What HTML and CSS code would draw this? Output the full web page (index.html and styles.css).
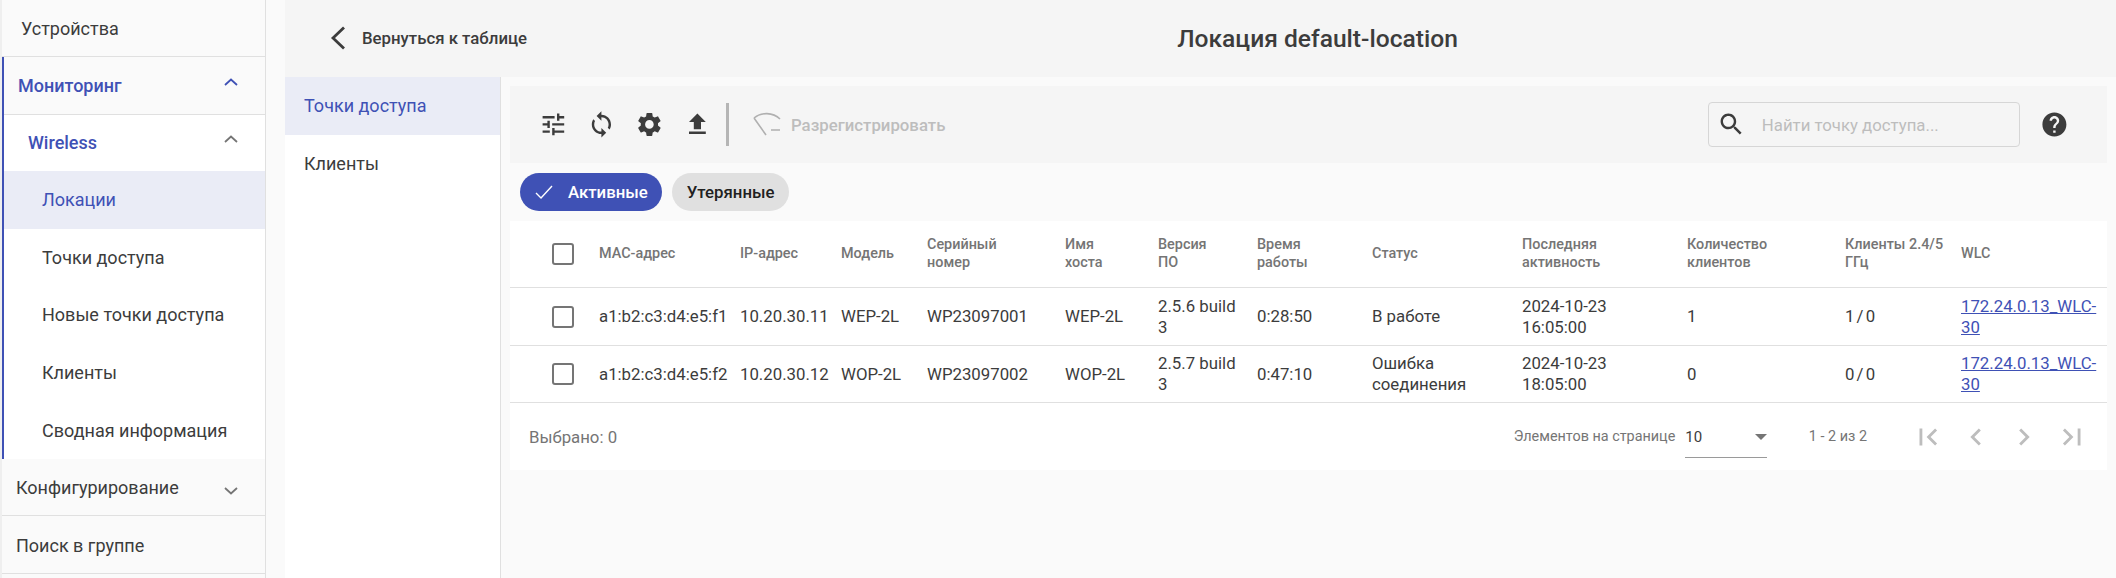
FILE: index.html
```html
<!DOCTYPE html>
<html lang="ru">
<head>
<meta charset="utf-8">
<title>Локация default-location</title>
<link rel="stylesheet" href="styles.css">
</head>
<body>
<div class="app">
  <nav class="sidebar">
    <div class="nav-item top first"><span class="label-first">Устройства</span></div>
    <div class="nav-group">
      <div class="nav-item top active-parent"><span>Мониторинг</span><svg class="chev up" viewBox="0 0 14 8"><polyline points="1,7 7,1.5 13,7"/></svg></div>
      <div class="nav-sub">
        <div class="nav-item wireless"><span>Wireless</span><svg class="chev up gray" viewBox="0 0 14 8"><polyline points="1,7 7,1.5 13,7"/></svg></div>
        <div class="nav-item leaf selected">Локации</div>
        <div class="nav-item leaf">Точки доступа</div>
        <div class="nav-item leaf">Новые точки доступа</div>
        <div class="nav-item leaf">Клиенты</div>
        <div class="nav-item leaf">Сводная информация</div>
      </div>
    </div>
    <div class="nav-item top plain"><span>Конфигурирование</span><svg class="chev down gray" viewBox="0 0 14 8"><polyline points="1,1 7,6.5 13,1"/></svg></div>
    <div class="nav-item top plain last"><span>Поиск в группе</span></div>
  </nav>
  <main class="main">
    <header class="page-head">
      <a class="back"><svg class="back-icon" viewBox="0 0 16 24"><polyline points="14,1.5 3,12 14,22.5"/></svg><span>Вернуться к таблице</span></a>
      <h1 class="title">Локация default-location</h1>
    </header>
    <div class="page-body">
      <aside class="tabs">
        <div class="tab on">Точки доступа</div>
        <div class="tab">Клиенты</div>
      </aside>
      <section class="content">
        <div class="toolbar">
          <button class="icon-btn"><svg viewBox="0 0 24 24"><path d="M3 17v2h6v-2H3zM3 5v2h10V5H3zm10 16v-2h8v-2h-8v-2h-2v6h2zM7 9v2H3v2h4v2h2V9H7zm14 4v-2H11v2h10zm-6-4h2V7h4V5h-4V3h-2v6z"/></svg></button>
          <button class="icon-btn"><svg viewBox="0 0 24 24"><path d="M12 4V1L8 5l4 4V6c3.31 0 6 2.69 6 6 0 1.01-.25 1.97-.7 2.8l1.46 1.46C19.54 15.03 20 13.57 20 12c0-4.42-3.58-8-8-8zm0 14c-3.31 0-6-2.69-6-6 0-1.01.25-1.97.7-2.8L5.24 7.74C4.46 8.97 4 10.43 4 12c0 4.42 3.58 8 8 8v3l4-4-4-4v3z"/></svg></button>
          <button class="icon-btn"><svg viewBox="0 0 24 24"><path d="M19.14 12.94c.04-.3.06-.61.06-.94 0-.32-.02-.64-.07-.94l2.03-1.58c.18-.14.23-.41.12-.61l-1.92-3.32c-.12-.22-.37-.29-.59-.22l-2.39.96c-.5-.38-1.03-.7-1.62-.94l-.36-2.54c-.04-.24-.24-.41-.48-.41h-3.84c-.24 0-.43.17-.47.41l-.36 2.54c-.59.24-1.13.57-1.62.94l-2.39-.96c-.22-.08-.47 0-.59.22L2.74 8.87c-.12.21-.08.47.12.61l2.03 1.58c-.05.3-.09.63-.09.94s.02.64.07.94l-2.03 1.58c-.18.14-.23.41-.12.61l1.92 3.32c.12.22.37.29.59.22l2.39-.96c.5.38 1.03.7 1.62.94l.36 2.54c.05.24.24.41.48.41h3.84c.24 0 .44-.17.47-.41l.36-2.54c.59-.24 1.13-.56 1.62-.94l2.39.96c.22.08.47 0 .59-.22l1.92-3.32c.12-.22.07-.47-.12-.61l-2.01-1.58zM12 15.6c-1.98 0-3.6-1.62-3.6-3.6s1.62-3.6 3.6-3.6 3.6 1.62 3.6 3.6-1.62 3.6-3.6 3.6z"/></svg></button>
          <button class="icon-btn"><svg viewBox="0 0 24 24"><path d="M9 16h6v-6h4l-7-7-7 7h4zm-4 2h14v2H5z"/></svg></button>
          <span class="divider"></span>
          <span class="unreg"><svg class="unreg-icon" viewBox="0 0 28 26"><path d="M1 6C8 0 20 0 27 7M1 6L13 23M18 18H27"/></svg>Разрегистрировать</span>
          <label class="search"><svg viewBox="0 0 24 24"><path d="M15.5 14h-.79l-.28-.27C15.41 12.59 16 11.11 16 9.5 16 5.91 13.09 3 9.5 3S3 5.91 3 9.5 5.91 16 9.5 16c1.61 0 3.09-.59 4.23-1.57l.27.28v.79l5 4.99L20.49 19l-4.99-5zm-6 0C7.01 14 5 11.99 5 9.5S7.01 5 9.5 5 14 7.01 14 9.5 11.99 14 9.5 14z"/></svg><span>Найти точку доступа...</span></label>
          <button class="icon-btn help"><svg viewBox="0 0 24 24"><path d="M12 2C6.48 2 2 6.48 2 12s4.48 10 10 10 10-4.48 10-10S17.52 2 12 2zm1 17h-2v-2h2v2zm2.07-7.75l-.9.92C13.45 12.9 13 13.5 13 15h-2v-.5c0-1.1.45-2.1 1.17-2.83l1.24-1.26c.37-.36.59-.86.59-1.41 0-1.1-.9-2-2-2s-2 .9-2 2H8c0-2.21 1.79-4 4-4s4 1.79 4 4c0 .88-.36 1.68-.93 2.25z"/></svg></button>
        </div>
        <div class="chips">
          <span class="chip chip-on"><svg class="check" viewBox="0 0 18 14"><polyline points="1,8 6,13 17,1"/></svg>Активные</span>
          <span class="chip">Утерянные</span>
        </div>
        <div class="card">
          <table class="grid">
            <colgroup>
              <col class="c-check"><col class="c-mac"><col class="c-ip"><col class="c-model"><col class="c-serial"><col class="c-host"><col class="c-ver"><col class="c-time"><col class="c-status"><col class="c-last"><col class="c-count"><col class="c-clients"><col class="c-wlc">
            </colgroup>
            <thead>
              <tr>
                <th class="check-cell"><span class="box"></span></th>
                <th>МАС-адрес</th><th>IP-адрес</th><th>Модель</th><th>Серийный<br>номер</th><th>Имя<br>хоста</th><th>Версия<br>ПО</th><th>Время<br>работы</th><th>Статус</th><th>Последняя<br>активность</th><th>Количество<br>клиентов</th><th>Клиенты 2.4/5<br>ГГц</th><th>WLC</th>
              </tr>
            </thead>
            <tbody>
              <tr>
                <td class="check-cell"><span class="box"></span></td>
                <td>a1:b2:c3:d4:e5:f1</td><td>10.20.30.11</td><td>WEP-2L</td><td>WP23097001</td><td>WEP-2L</td><td>2.5.6 build<br>3</td><td>0:28:50</td><td>В работе</td><td>2024-10-23<br>16:05:00</td><td>1</td><td class="ratio">1 / 0</td><td><a class="link">172.24.0.13_WLC-<br>30</a></td>
              </tr>
              <tr>
                <td class="check-cell"><span class="box"></span></td>
                <td>a1:b2:c3:d4:e5:f2</td><td>10.20.30.12</td><td>WOP-2L</td><td>WP23097002</td><td>WOP-2L</td><td>2.5.7 build<br>3</td><td>0:47:10</td><td>Ошибка<br>соединения</td><td>2024-10-23<br>18:05:00</td><td>0</td><td class="ratio">0 / 0</td><td><a class="link">172.24.0.13_WLC-<br>30</a></td>
              </tr>
            </tbody>
          </table>
          <div class="pager">
            <span class="selected-count">Выбрано: 0</span>
            <span class="per-page">Элементов на странице</span>
            <span class="select"><span>10</span><i class="caret"></i></span>
            <span class="range">1 - 2 из 2</span>
            <span class="pager-btns">
              <svg viewBox="0 0 24 24"><path d="M18.41 16.59L13.82 12l4.59-4.59L17 6l-6 6 6 6zM6 6h2v12H6z"/></svg>
              <svg viewBox="0 0 24 24"><path d="M15.41 7.41L14 6l-6 6 6 6 1.41-1.41L10.83 12z"/></svg>
              <svg viewBox="0 0 24 24"><path d="M10 6L8.59 7.41 13.17 12l-4.58 4.59L10 18l6-6z"/></svg>
              <svg viewBox="0 0 24 24"><path d="M5.59 7.41L10.18 12l-4.59 4.59L7 18l6-6-6-6zM16 6h2v12h-2z"/></svg>
            </span>
          </div>
        </div>
      </section>
    </div>
  </main>
</div>
</body>
</html>
```
FILE: styles.css
```css
* { box-sizing: border-box; }
html, body { margin: 0; height: 100%; overflow: hidden; }
body { background: #fafafa; font-family: Roboto, "Liberation Sans", sans-serif; color: #3c3c3c; }
.app { display: flex; height: 578px; }

/* sidebar */
.sidebar { width: 266px; flex: none; border-left: 2px solid #efefef; border-right: 1px solid #e0e0e0; background: #fafafa; }
.nav-item { height: 57.6px; display: flex; align-items: center; font-size: 18px; }
.nav-item.top { height: 57.5px; border-bottom: 1px solid #e0e0e0; justify-content: space-between; padding: 1px 27px 0 14px; }
.nav-item.first { height: 57px; padding-top: 0; }
.nav-item.last { height: 58px; }
.label-first { margin-left: 5px; }
.nav-group { border-left: 2px solid #3f51b5; }
.nav-group .nav-item.top { padding-left: 14px; }
.active-parent { color: #3f51b5; font-weight: 500; }
.nav-sub { background: #fff; }
.nav-item.wireless { height: 56.5px; justify-content: space-between; padding: 0 27px 0 24px; color: #3f51b5; font-weight: 500; }
.leaf { padding-left: 38px; }
.selected { background: #eaecf6; color: #3f51b5; }
.chev { width: 14px; height: 8px; fill: none; stroke: #3f51b5; stroke-width: 1.8; }
.chev.gray { stroke: #757575; }
.chev.up { margin-bottom: 7px; }
.chev.down { margin-top: 7px; }

/* main */
.main { flex: 1; min-width: 0; margin-left: 19px; display: flex; flex-direction: column; }
.page-head { height: 77px; flex: none; background: #f5f5f5; position: relative; display: flex; align-items: center; justify-content: center; padding-left: 234px; }
.back { position: absolute; left: 45px; top: 26px; display: flex; align-items: center; gap: 16px; font-size: 16.8px; font-weight: 500; color: #3c3c3c; }
.back-icon { width: 16px; height: 24px; fill: none; stroke: #3c3c3c; stroke-width: 2.8; }
.title { margin: 0; font-size: 24.6px; font-weight: 500; color: #3c3c3c; }
.page-body { flex: 1; display: flex; min-height: 0; }
.tabs { width: 216px; flex: none; background: #fff; border-right: 1px solid #e0e0e0; }
.tab { height: 57.5px; display: flex; align-items: center; padding-left: 19px; font-size: 18px; }
.tab.on { background: #eaecf6; color: #3f51b5; }
.content { flex: 1; min-width: 0; padding: 9px 9px 0; }

/* toolbar */
.toolbar { height: 77px; background: #f5f5f5; display: flex; align-items: center; padding: 0 29px 0 19.5px; }
.icon-btn { width: 48px; height: 48px; padding: 0; border: 0; background: none; display: flex; align-items: center; justify-content: center; }
.icon-btn svg { width: 28.8px; height: 28.8px; fill: #3c3c3c; }
.divider { width: 3px; height: 43px; background: #b5b5b5; margin-left: 4.5px; }
.unreg { display: flex; align-items: center; gap: 10px; margin-left: 24px; font-size: 16.8px; font-weight: 500; color: #bdbdbd; }
.unreg-icon { width: 28px; height: 26px; fill: none; stroke: #b0b0b0; stroke-width: 1.6; }
.search { margin-left: auto; margin-right: 10px; width: 312px; height: 45px; border: 1px solid #d6d6d6; border-radius: 4px; display: flex; align-items: center; gap: 16px; padding-left: 8px; font-size: 16.8px; color: #bdbdbd; }
.search svg { width: 28.8px; height: 28.8px; fill: #3c3c3c; flex: none; }

/* chips */
.chips { display: flex; gap: 10px; margin: 10px 0 10px 10px; }
.chip { height: 38px; border-radius: 19px; background: #e0e0e0; color: #212121; font-size: 16.8px; font-weight: 500; display: flex; align-items: center; padding: 0 15px; }
.chip-on { background: #3f51b5; color: #fff; padding-right: 14px; }
.check { width: 18px; height: 14px; fill: none; stroke: #fff; stroke-width: 1.4; margin-right: 15px; }

/* table */
.card { background: #fff; height: 249px; }
.grid { width: 100%; table-layout: fixed; border-collapse: separate; border-spacing: 0; }
.c-check { width: 89px; } .c-mac { width: 141px; } .c-ip { width: 101px; } .c-model { width: 86px; } .c-serial { width: 138px; } .c-host { width: 93px; } .c-ver { width: 99px; } .c-time { width: 115px; } .c-status { width: 150px; } .c-last { width: 165px; } .c-count { width: 158px; } .c-clients { width: 116px; }
.grid th, .grid td { padding: 0; text-align: left; vertical-align: middle; border-bottom: 1px solid #e0e0e0; white-space: nowrap; }
.grid th { height: 67px; font-size: 14.4px; line-height: 18px; font-weight: 500; color: #757575; }
.grid td { height: 57.5px; padding-top: 1px; font-size: 16.8px; line-height: 21px; color: #3c3c3c; }
.grid td.ratio { word-spacing: -2px; }
.check-cell { padding-left: 42px !important; }
.box { display: block; width: 22px; height: 22px; border: 2px solid #757575; border-radius: 3px; }
.link { color: #3f51b5; text-decoration: underline; }

/* pager */
.pager { height: 66px; display: flex; align-items: center; padding: 1px 19px 0; font-size: 14.4px; color: #757575; }
.selected-count { font-size: 16.8px; margin-right: auto; }
.select { width: 82px; height: 37px; margin: 6px 0 0 10px; display: flex; align-items: center; justify-content: space-between; border-bottom: 1px solid #9a9a9a; color: #3c3c3c; font-size: 15px; padding-bottom: 5px; }
.caret { width: 0; height: 0; border-left: 6px solid transparent; border-right: 6px solid transparent; border-top: 6px solid #757575; }
.range { margin-left: 41.6px; }
.pager-btns { display: flex; gap: 14px; margin-left: 44px; margin-right: -1px; }
.pager-btns svg { width: 34px; height: 34px; fill: #bdbdbd; display: block; }
```
